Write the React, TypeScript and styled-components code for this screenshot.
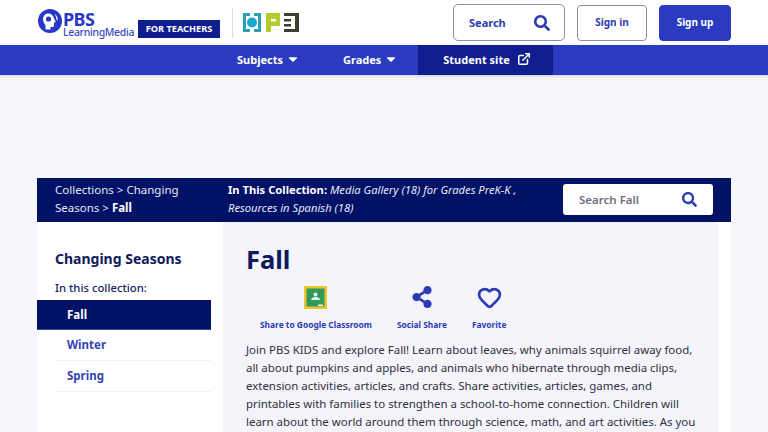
import * as React from "react";
import styled, { createGlobalStyle } from "styled-components";
import { FaSearch, FaShareAlt, FaCaretDown } from "react-icons/fa";
import { Heart, ExternalLink } from "lucide-react";

const Global = createGlobalStyle`
  html, body {
    margin: 0;
    height: 432px;
    overflow: hidden;
    background: #f6f6fb;
    font-family: "Noto Sans", "Open Sans", sans-serif;
  }
  * { box-sizing: border-box; }
`;

const Header = styled.header`
  display: flex;
  align-items: flex-start;
  height: 45px;
  padding: 5px 37px 0 38px;
  background: #fff;
`;

const LogoBlock = styled.div`
  display: flex;
  align-items: flex-start;
  width: 100px;
  padding-top: 4px;
`;

const LogoWords = styled.div`
  display: flex;
  flex-direction: column;
  margin-left: 1px;
  color: #2638c4;
`;

const LogoPbs = styled.span`
  font: 700 18px/16px "Noto Sans", sans-serif;
  letter-spacing: -0.6px;
  margin-top: 2px;
`;

const LogoSub = styled.span`
  font: 500 10.5px/11px "Noto Sans", sans-serif;
  letter-spacing: -0.35px;
  color: #3a4bc2;
`;

const TeachersBadge = styled.div`
  width: 82px;
  height: 18px;
  margin-top: 15px;
  background: #0f1d8f;
  color: #fff;
  font-size: 9.2px;
  font-weight: 700;
  line-height: 18px;
  text-align: center;
`;

const Divider = styled.div`
  width: 1px;
  height: 30px;
  margin: 3px 10px 0 12px;
  background: #dcdce2;
`;

const OpbLogo = styled.svg`
  display: block;
  margin-top: 8px;
`;

const HeaderActions = styled.div`
  display: flex;
  align-items: flex-start;
  gap: 12px;
  margin-left: auto;
`;

const SearchButton = styled.div`
  display: flex;
  align-items: center;
  justify-content: space-between;
  width: 112px;
  height: 37px;
  margin-top: -1px;
  padding: 0 14px 0 15px;
  border: 1px solid #8a8fb8;
  border-radius: 5px;
  background: #fff;
  color: #2b3bb3;
  font-size: 11px;
  font-weight: 700;
`;

const AuthButton = styled.div<{ $solid?: boolean }>`
  display: flex;
  align-items: center;
  justify-content: center;
  width: ${p => (p.$solid ? "72px" : "70px")};
  height: 36px;
  padding-bottom: 2px;
  border: 1px solid ${p => (p.$solid ? "#2a3bc0" : "#8a8fb8")};
  border-radius: 4px;
  background: ${p => (p.$solid ? "#2a3bc0" : "#fff")};
  color: ${p => (p.$solid ? "#fff" : "#2b3bb3")};
  font-size: 10px;
  font-weight: 700;
`;

const Nav = styled.nav`
  display: flex;
  height: 30px;
  padding-left: 237px;
  background: #2a3bc0;
  box-shadow: 0 1px 3px rgba(20, 30, 120, 0.2);
  color: #fff;
  font-size: 11px;
  font-weight: 700;
`;

const NavItem = styled.div<{ $gapAfter: number }>`
  display: flex;
  align-items: center;
  gap: 3px;
  padding-bottom: 2px;
  margin-right: ${p => p.$gapAfter}px;
`;

const NavCurrent = styled.div`
  display: flex;
  align-items: center;
  gap: 7px;
  width: 135px;
  padding: 0 0 2px 25px;
  background: #0f1d8f;
`;

const AdSpace = styled.div`
  height: 103px;
`;

const Wrap = styled.div`
  width: 694px;
  margin-left: 37px;
`;

const Banner = styled.div`
  display: flex;
  height: 44px;
  background: #001166;
  color: #e6e8f5;
  line-height: 18px;
`;

const Crumbs = styled.div`
  width: 191px;
  padding: 3px 40px 0 18px;
  font-size: 11.5px;
  b { color: #fff; }
`;

const CollectionInfo = styled.div`
  width: 335px;
  padding-top: 3px;
  font-size: 11.2px;
  font-style: italic;
  b { font-style: normal; color: #fff; }
`;

const BannerSearch = styled.div`
  display: flex;
  align-items: center;
  justify-content: space-between;
  width: 150px;
  height: 31px;
  margin-top: 6px;
  padding: 0 16px;
  border-radius: 3px;
  background: #fff;
  color: #6d6f7c;
  font-size: 11.5px;
  font-weight: 600;
  svg { color: #2b3bb3; }
`;

const Body = styled.div`
  display: flex;
  height: 300px;
  background: #fff;
`;

const Sidebar = styled.aside`
  width: 186px;
  padding-top: 27px;
`;

const SideTitle = styled.h2`
  margin: 0 0 0 18px;
  color: #0f1a5c;
  font-size: 14px;
  font-weight: 700;
  line-height: 20px;
`;

const SideLabel = styled.div`
  margin: 10px 0 3px 18px;
  color: #1a2260;
  font-size: 11.3px;
  font-weight: 500;
  line-height: 18px;
`;

const SideList = styled.ul`
  width: 174px;
  margin: 0;
  padding: 0;
  list-style: none;
`;

const SideRow = styled.li<{ $active?: boolean }>`
  height: ${p => (p.$active ? "30px" : "31px")};
  margin-left: ${p => (p.$active ? "0" : "20px")};
  padding-left: ${p => (p.$active ? "30px" : "10px")};
  border-bottom: 1px solid ${p => (p.$active ? "#3b4a9a" : "#f2f2f6")};
  background: ${p => (p.$active ? "#001166" : "transparent")};
  color: ${p => (p.$active ? "#fff" : "#3344b4")};
  font-size: 11.5px;
  font-weight: 700;
  line-height: 29px;
`;

const Main = styled.main`
  width: 495px;
  padding: 20px 0 0 23px;
  background: #f4f4fa;
`;

const Title = styled.h1`
  margin: 0;
  color: #0f1a5c;
  font-size: 25.5px;
  font-weight: 700;
  line-height: 35px;
`;

const Actions = styled.div`
  display: flex;
  margin: 8px 0 0 14px;
  gap: 25px;
`;

const Action = styled.div`
  display: flex;
  flex-direction: column;
  align-items: center;
  gap: 10px;
  color: #2b3bb3;
  font-size: 8.4px;
  font-weight: 700;
  line-height: 12px;
`;

const IconSlot = styled.div`
  display: flex;
  align-items: center;
  justify-content: center;
  height: 24px;
`;

const Blurb = styled.p`
  width: 455px;
  margin: 10px 0 0;
  color: #30323f;
  font-size: 11.45px;
  line-height: 18px;
`;

function PbsHead() {
  return (
    <svg width="24" height="24" viewBox="0 0 24 24">
      <circle cx="12" cy="12" r="12" fill="#2638c4" />
      <path d="M9 4.500c3.500-.6 6.500 1.500 7 5l1.800 3.500-1.800.8v2.700c0 1-1 1.500-2 1.500h-1.500v2.500H7.500v-4L5.500 13 5 9.500c.4-2.500 2-4.500 4-5z" fill="#fff" />
      <path d="M16.500 4.800c2.200 1.400 3.500 4 3.200 7l-1.200-1.200c-.3-2.200-1-4-2-5.800z" fill="#fff" />
      <circle cx="10.500" cy="10" r="2.600" fill="#2638c4" />
    </svg>
  );
}

function OpbMark() {
  return (
    <OpbLogo width="56" height="19" viewBox="0 0 56 19">
      <path d="M0 0h7v3H3v13h4v3H0zM11 0h7v19h-7v-3h4V3h-4z" fill="#2aa0b2" />
      <circle cx="9" cy="9.500" r="5" fill="#19a7cf" />
      <path d="M23 0h14v13h-9v6h-5z" fill="#b7cb2e" />
      <rect x="28" y="6" width="5" height="2.500" fill="#fff" />
      <path d="M41 0h15v19H41v-3h11V3H41z" fill="#3c3f2e" />
      <rect x="41" y="6" width="7" height="2.500" fill="#3c3f2e" />
      <rect x="41" y="11" width="7" height="2.500" fill="#3c3f2e" />
    </OpbLogo>
  );
}

function ClassroomIcon() {
  return (
    <svg width="23" height="23" viewBox="0 0 23 23">
      <rect x="0" y="0" width="23" height="23" fill="#ecc62c" />
      <rect x="2.500" y="2.500" width="18" height="18" fill="#2f9a5c" />
      <circle cx="11.500" cy="8.500" r="2" fill="#e8f3ec" />
      <path d="M7 14c0-2 2-3 4.500-3s4.500 1 4.500 3z" fill="#e8f3ec" />
      <rect x="14" y="18.500" width="5" height="1.500" fill="#f4f4f4" />
    </svg>
  );
}

export default function App() {
  return (
    <>
      <Global />
      <Header>
        <LogoBlock>
          <PbsHead />
          <LogoWords>
            <LogoPbs>PBS</LogoPbs>
            <LogoSub>LearningMedia</LogoSub>
          </LogoWords>
        </LogoBlock>
        <TeachersBadge>FOR TEACHERS</TeachersBadge>
        <Divider />
        <OpbMark />
        <HeaderActions>
          <SearchButton>
            Search
            <FaSearch size={16} />
          </SearchButton>
          <AuthButton>Sign in</AuthButton>
          <AuthButton $solid>Sign up</AuthButton>
        </HeaderActions>
      </Header>
      <Nav>
        <NavItem $gapAfter={43}>
          Subjects <FaCaretDown size={14} />
        </NavItem>
        <NavItem $gapAfter={20}>
          Grades <FaCaretDown size={14} />
        </NavItem>
        <NavCurrent>
          Student site <ExternalLink size={14} strokeWidth={2.6} />
        </NavCurrent>
      </Nav>
      <AdSpace />
      <Wrap>
        <Banner>
          <Crumbs>
            Collections &gt; Changing Seasons &gt; <b>Fall</b>
          </Crumbs>
          <CollectionInfo>
            <b>In This Collection:</b> Media Gallery (18) for Grades PreK-K ,
            <br />
            Resources in Spanish (18)
          </CollectionInfo>
          <BannerSearch>
            Search Fall
            <FaSearch size={15} />
          </BannerSearch>
        </Banner>
        <Body>
          <Sidebar>
            <SideTitle>Changing Seasons</SideTitle>
            <SideLabel>In this collection:</SideLabel>
            <SideList>
              <SideRow $active>Fall</SideRow>
              <SideRow>Winter</SideRow>
              <SideRow>Spring</SideRow>
            </SideList>
          </Sidebar>
          <Main>
            <Title>Fall</Title>
            <Actions>
              <Action>
                <IconSlot>
                  <ClassroomIcon />
                </IconSlot>
                Share to Google Classroom
              </Action>
              <Action>
                <IconSlot>
                  <FaShareAlt size={22} />
                </IconSlot>
                Social Share
              </Action>
              <Action>
                <IconSlot>
                  <Heart size={25} strokeWidth={2.6} />
                </IconSlot>
                Favorite
              </Action>
            </Actions>
            <Blurb>
              Join PBS KIDS and explore Fall! Learn about leaves, why animals squirrel away food, all about
              pumpkins and apples, and animals who hibernate through media clips, extension activities,
              articles, and crafts. Share activities, articles, games, and printables with families to
              strengthen a school-to-home connection. Children will learn about the world around them
              through science, math, and art activities. As you explore the season together.
            </Blurb>
          </Main>
        </Body>
      </Wrap>
    </>
  );
}
